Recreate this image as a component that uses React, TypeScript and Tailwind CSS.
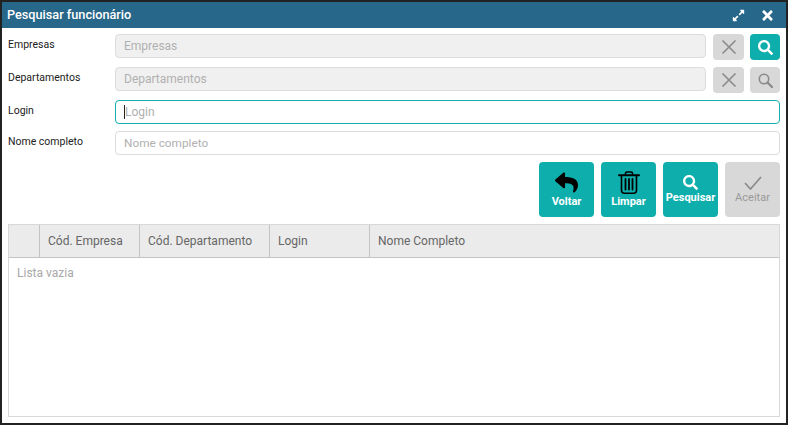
import React from "react";
import { FaExpandAlt, FaReply, FaSearch, FaTimes } from "react-icons/fa";

function TrashIcon() {
  return (
    <svg width="22" height="23" viewBox="0 0 22 23" fill="none" stroke="#000" strokeWidth="1.6" strokeLinecap="round">
      <path d="M1 4.2h20" strokeWidth="2" />
      <path d="M7.5 3.5V2.4c0-.8.6-1.4 1.4-1.4h4.2c.8 0 1.4.6 1.4 1.4v1.1" />
      <path d="M3.5 5v14.2c0 1.9 1.3 3 3 3h9c1.7 0 3-1.1 3-3V5" />
      <path d="M7.5 8v10.5M11 8v10.5M14.500 8v10.5" strokeWidth="1.8" />
    </svg>
  );
}

function ThinX() {
  return (
    <svg width="16" height="16" viewBox="0 0 16 16" stroke="#8c8c8c" strokeWidth="1.7">
      <path d="M1.500 1.500l13 13M14.500 1.500l-13 13" />
    </svg>
  );
}

function ThinSearch() {
  return (
    <svg width="15" height="15" viewBox="0 0 15 15" fill="none" stroke="#8a8a8a" strokeWidth="1.6">
      <circle cx="6" cy="6" r="4.700" />
      <path d="M9.500 9.500l4.500 4.500" strokeWidth="2.200" strokeLinecap="round" />
    </svg>
  );
}

function ThinCheck() {
  return (
    <svg width="18" height="14" viewBox="0 0 18 14" fill="none" stroke="#8a8a8a" strokeWidth="1.700">
      <path d="M1 7l5.500 6L17 1" />
    </svg>
  );
}

function FilterRow({ label, active }: { label: string; active?: boolean }) {
  return (
    <div className="flex h-[24px] items-stretch">
      <label className="w-[107px] pt-[4px] text-[10.5px] leading-[14px] text-[#222]">{label}</label>
      <input
        disabled
        placeholder={label}
        className="h-[24px] min-w-0 flex-1 rounded-[4px] border border-[#dcdcdc] bg-[#f0f0f0] px-2 text-[12px] placeholder:text-[#b0b0b0]"
      />
      <button className="ml-[7px] flex h-[26px] w-[31px] items-center justify-center rounded-[4px] bg-[#d8d8d8]">
        <ThinX />
      </button>
      <button
        className={`ml-[6px] flex h-[26px] w-[30px] items-center justify-center rounded-[4px] ${
          active ? "bg-[#0eaeac] text-white" : "bg-[#d8d8d8]"
        }`}
      >
        {active ? <FaSearch size={15} /> : <ThinSearch />}
      </button>
    </div>
  );
}

function ActionButton({
  label,
  icon,
  disabled,
}: {
  label: string;
  icon: React.ReactNode;
  disabled?: boolean;
}) {
  return (
    <button
      className={`flex h-[55px] w-[55px] flex-col items-center justify-center rounded-[4px] text-[11px] font-bold leading-[13px] ${
        disabled ? "bg-[#d8d8d8] font-normal text-[#9a9a9a]" : "bg-[#0eaeac] text-white"
      }`}
    >
      {icon}
      <span className="mt-[1px]">{label}</span>
    </button>
  );
}

const columns = [
  { label: "", width: "w-[31px]" },
  { label: "Cód. Empresa", width: "w-[100px]" },
  { label: "Cód. Departamento", width: "w-[130px]" },
  { label: "Login", width: "w-[100px]" },
  { label: "Nome Completo", width: "flex-1" },
];

export default function App() {
  return (
    <div className="flex h-[425px] w-[788px] flex-col overflow-hidden border-2 border-[#222] bg-white font-['Roboto',sans-serif]">
      <div className="flex h-[26px] shrink-0 items-center justify-between bg-[#27678a] pl-[5px] pr-[11px] text-white">
        <span className="text-[12.7px] font-medium">Pesquisar funcionário</span>
        <div className="flex items-center gap-[15px]">
          <FaExpandAlt size={13} />
          <FaTimes size={15} />
        </div>
      </div>

      <div className="flex flex-1 flex-col px-[6px] pb-[6px] pt-[6px]">
        <div className="flex flex-col gap-[9px]">
          <FilterRow label="Empresas" active />
          <FilterRow label="Departamentos" />
        </div>

        <div className="mt-[9px] flex h-[24px]">
          <label className="w-[107px] pt-[4px] text-[10.5px] leading-[14px] text-[#222]">Login</label>
          <div className="flex h-[24px] flex-1 items-center rounded-[4px] border border-[#0eaeac] bg-white px-2 text-[12px] text-[#b0b0b0]">
            <span className="h-[14px] w-px bg-[#222]" />
            Login
          </div>
        </div>

        <div className="mt-[7px] flex h-[24px]">
          <label className="w-[107px] pt-[4px] text-[10.5px] leading-[14px] text-[#222]">Nome completo</label>
          <input
            placeholder="Nome completo"
            className="h-[24px] min-w-0 flex-1 rounded-[4px] border border-[#dcdcdc] bg-white px-2 text-[11.8px] placeholder:text-[#b0b0b0]"
          />
        </div>

        <div className="mt-[7px] flex justify-end gap-[7px]">
          <ActionButton label="Voltar" icon={<FaReply size={23} className="text-black" />} />
          <ActionButton label="Limpar" icon={<TrashIcon />} />
          <ActionButton label="Pesquisar" icon={<FaSearch size={15} />} />
          <ActionButton label="Aceitar" disabled icon={<ThinCheck />} />
        </div>

        <div className="mt-[7px] flex flex-1 flex-col border border-[#d8d8d8]">
          <div className="flex h-[33px] shrink-0 border-b border-[#c4c4c4] bg-[#ebebeb]">
            {columns.map((col, i) => (
              <div
                key={i}
                className={`flex items-center px-[8px] text-[12px] text-[#666] ${col.width} ${
                  i < columns.length - 1 ? "border-r border-[#c4c4c4]" : ""
                }`}
              >
                {col.label}
              </div>
            ))}
          </div>
          <div className="px-[8px] pt-[6px] text-[12px] text-[#a8a8a8]">Lista vazia</div>
        </div>
      </div>
    </div>
  );
}
